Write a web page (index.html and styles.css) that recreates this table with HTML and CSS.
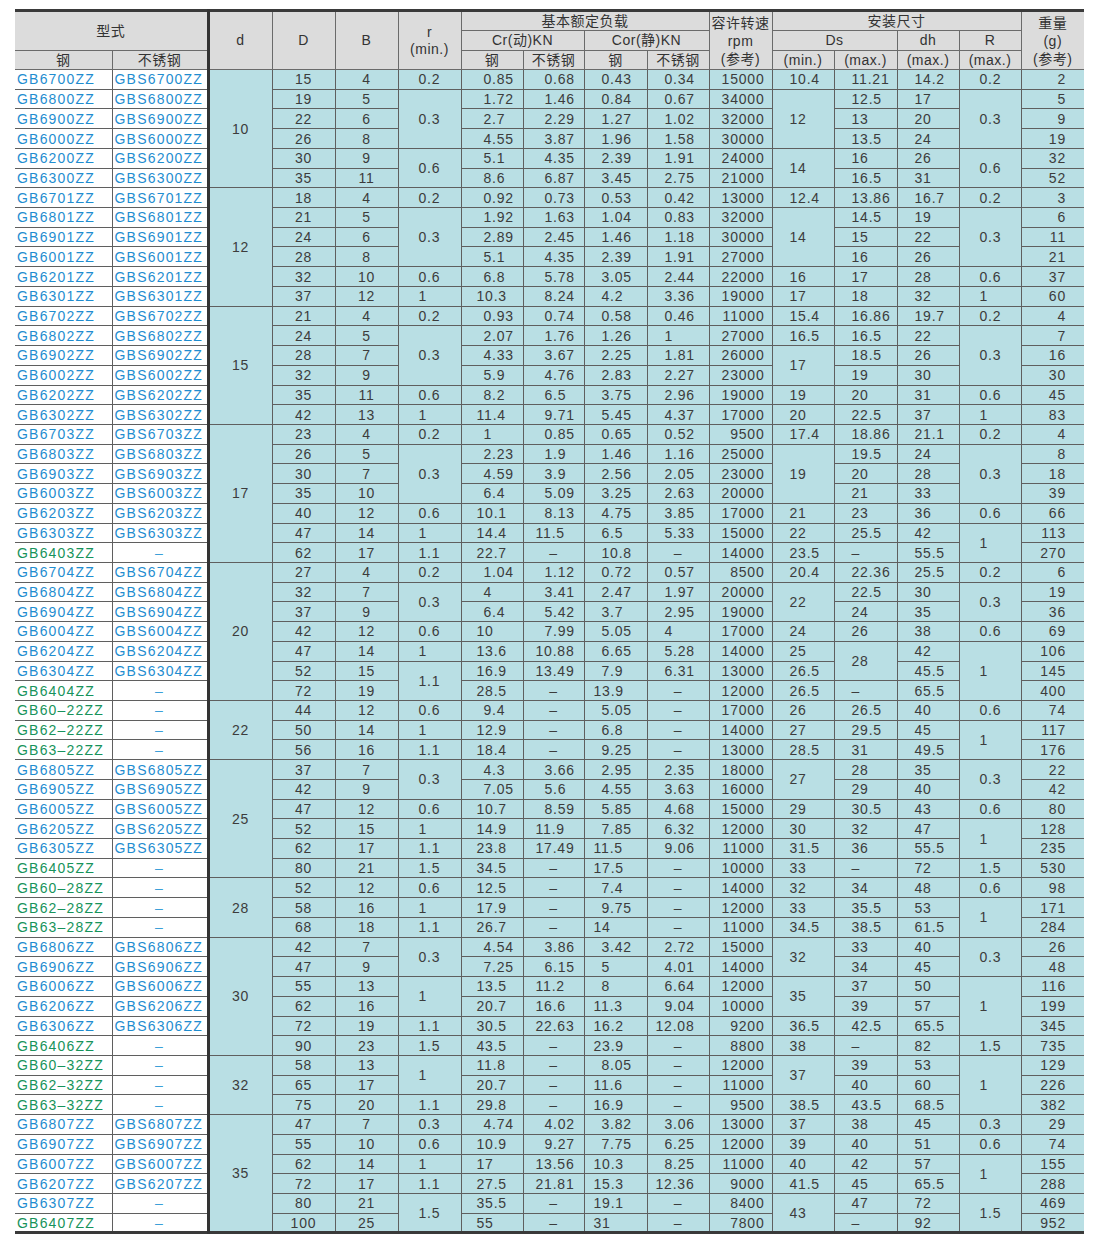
FILE: index.html
```html
<!DOCTYPE html>
<html lang="zh">
<head>
<meta charset="utf-8">
<title>深沟球轴承 ZZ 规格表</title>
<link rel="stylesheet" href="styles.css">
</head>
<body>
<table class="spec">
<colgroup>
<col class="w97"><col class="w96"><col class="w64"><col class="w63"><col class="w63"><col class="w63"><col class="w62"><col class="w61"><col class="w63"><col class="w62"><col class="w63"><col class="w62"><col class="w63"><col class="w62"><col class="w62"><col class="w63">
</colgroup>
<thead>
<tr class="h1">
<th colspan="2" rowspan="2" class="first thick">型式</th>
<th rowspan="3">d</th>
<th rowspan="3">D</th>
<th rowspan="3">B</th>
<th rowspan="3" class="two">r<br>(min.)</th>
<th colspan="4">基本额定负载</th>
<th rowspan="3" class="stack">容许转速<br>rpm<br>(参考)</th>
<th colspan="4">安装尺寸</th>
<th rowspan="3" class="stack last">重量<br>(g)<br>(参考)</th>
</tr>
<tr class="h2">
<th colspan="2">Cr(动)KN</th>
<th colspan="2">Cor(静)KN</th>
<th colspan="2">Ds</th>
<th>dh</th>
<th>R</th>
</tr>
<tr class="h3">
<th class="first">钢</th>
<th class="thick">不锈钢</th>
<th>钢</th>
<th>不锈钢</th>
<th>钢</th>
<th>不锈钢</th>
<th>(min.)</th>
<th>(max.)</th>
<th>(max.)</th>
<th>(max.)</th>
</tr>
</thead>
<tbody>
<tr><td class="mo">GB6700ZZ</td><td class="st">GBS6700ZZ</td><td rowspan="6">10</td><td>15</td><td>4</td><td class="rr">0.2</td><td class="cr">0.85</td><td class="cs">0.68</td><td class="co">0.43</td><td class="os">0.34</td><td class="rpm">15000</td><td class="ds">10.4</td><td class="ds">11.21</td><td class="ds">14.2</td><td class="rr">0.2</td><td class="wt">2</td></tr>
<tr><td class="mo">GB6800ZZ</td><td class="st">GBS6800ZZ</td><td>19</td><td>5</td><td class="rr" rowspan="3">0.3</td><td class="cr">1.72</td><td class="cs">1.46</td><td class="co">0.84</td><td class="os">0.67</td><td class="rpm">34000</td><td class="ds" rowspan="3">12</td><td class="ds">12.5</td><td class="ds">17</td><td class="rr" rowspan="3">0.3</td><td class="wt">5</td></tr>
<tr><td class="mo">GB6900ZZ</td><td class="st">GBS6900ZZ</td><td>22</td><td>6</td><td class="cr">2.7</td><td class="cs">2.29</td><td class="co">1.27</td><td class="os">1.02</td><td class="rpm">32000</td><td class="ds">13</td><td class="ds">20</td><td class="wt">9</td></tr>
<tr><td class="mo">GB6000ZZ</td><td class="st">GBS6000ZZ</td><td>26</td><td>8</td><td class="cr">4.55</td><td class="cs">3.87</td><td class="co">1.96</td><td class="os">1.58</td><td class="rpm">30000</td><td class="ds">13.5</td><td class="ds">24</td><td class="wt">19</td></tr>
<tr><td class="mo">GB6200ZZ</td><td class="st">GBS6200ZZ</td><td>30</td><td>9</td><td class="rr" rowspan="2">0.6</td><td class="cr">5.1</td><td class="cs">4.35</td><td class="co">2.39</td><td class="os">1.91</td><td class="rpm">24000</td><td class="ds" rowspan="2">14</td><td class="ds">16</td><td class="ds">26</td><td class="rr" rowspan="2">0.6</td><td class="wt">32</td></tr>
<tr><td class="mo">GB6300ZZ</td><td class="st">GBS6300ZZ</td><td>35</td><td>11</td><td class="cr">8.6</td><td class="cs">6.87</td><td class="co">3.45</td><td class="os">2.75</td><td class="rpm">21000</td><td class="ds">16.5</td><td class="ds">31</td><td class="wt">52</td></tr>

<tr><td class="mo">GB6701ZZ</td><td class="st">GBS6701ZZ</td><td rowspan="6">12</td><td>18</td><td>4</td><td class="rr">0.2</td><td class="cr">0.92</td><td class="cs">0.73</td><td class="co">0.53</td><td class="os">0.42</td><td class="rpm">13000</td><td class="ds">12.4</td><td class="ds">13.86</td><td class="ds">16.7</td><td class="rr">0.2</td><td class="wt">3</td></tr>
<tr><td class="mo">GB6801ZZ</td><td class="st">GBS6801ZZ</td><td>21</td><td>5</td><td class="rr" rowspan="3">0.3</td><td class="cr">1.92</td><td class="cs">1.63</td><td class="co">1.04</td><td class="os">0.83</td><td class="rpm">32000</td><td class="ds" rowspan="3">14</td><td class="ds">14.5</td><td class="ds">19</td><td class="rr" rowspan="3">0.3</td><td class="wt">6</td></tr>
<tr><td class="mo">GB6901ZZ</td><td class="st">GBS6901ZZ</td><td>24</td><td>6</td><td class="cr">2.89</td><td class="cs">2.45</td><td class="co">1.46</td><td class="os">1.18</td><td class="rpm">30000</td><td class="ds">15</td><td class="ds">22</td><td class="wt">11</td></tr>
<tr><td class="mo">GB6001ZZ</td><td class="st">GBS6001ZZ</td><td>28</td><td>8</td><td class="cr">5.1</td><td class="cs">4.35</td><td class="co">2.39</td><td class="os">1.91</td><td class="rpm">27000</td><td class="ds">16</td><td class="ds">26</td><td class="wt">21</td></tr>
<tr><td class="mo">GB6201ZZ</td><td class="st">GBS6201ZZ</td><td>32</td><td>10</td><td class="rr">0.6</td><td class="cr">6.8</td><td class="cs">5.78</td><td class="co">3.05</td><td class="os">2.44</td><td class="rpm">22000</td><td class="ds">16</td><td class="ds">17</td><td class="ds">28</td><td class="rr">0.6</td><td class="wt">37</td></tr>
<tr><td class="mo">GB6301ZZ</td><td class="st">GBS6301ZZ</td><td>37</td><td>12</td><td class="rr">1</td><td class="cr2">10.3</td><td class="cs">8.24</td><td class="co">4.2</td><td class="os">3.36</td><td class="rpm">19000</td><td class="ds">17</td><td class="ds">18</td><td class="ds">32</td><td class="rr">1</td><td class="wt">60</td></tr>

<tr><td class="mo">GB6702ZZ</td><td class="st">GBS6702ZZ</td><td rowspan="6">15</td><td>21</td><td>4</td><td class="rr">0.2</td><td class="cr">0.93</td><td class="cs">0.74</td><td class="co">0.58</td><td class="os">0.46</td><td class="rpm">11000</td><td class="ds">15.4</td><td class="ds">16.86</td><td class="ds">19.7</td><td class="rr">0.2</td><td class="wt">4</td></tr>
<tr><td class="mo">GB6802ZZ</td><td class="st">GBS6802ZZ</td><td>24</td><td>5</td><td class="rr" rowspan="3">0.3</td><td class="cr">2.07</td><td class="cs">1.76</td><td class="co">1.26</td><td class="os">1</td><td class="rpm">27000</td><td class="ds">16.5</td><td class="ds">16.5</td><td class="ds">22</td><td class="rr" rowspan="3">0.3</td><td class="wt">7</td></tr>
<tr><td class="mo">GB6902ZZ</td><td class="st">GBS6902ZZ</td><td>28</td><td>7</td><td class="cr">4.33</td><td class="cs">3.67</td><td class="co">2.25</td><td class="os">1.81</td><td class="rpm">26000</td><td class="ds" rowspan="2">17</td><td class="ds">18.5</td><td class="ds">26</td><td class="wt">16</td></tr>
<tr><td class="mo">GB6002ZZ</td><td class="st">GBS6002ZZ</td><td>32</td><td>9</td><td class="cr">5.9</td><td class="cs">4.76</td><td class="co">2.83</td><td class="os">2.27</td><td class="rpm">23000</td><td class="ds">19</td><td class="ds">30</td><td class="wt">30</td></tr>
<tr><td class="mo">GB6202ZZ</td><td class="st">GBS6202ZZ</td><td>35</td><td>11</td><td class="rr">0.6</td><td class="cr">8.2</td><td class="cs">6.5</td><td class="co">3.75</td><td class="os">2.96</td><td class="rpm">19000</td><td class="ds">19</td><td class="ds">20</td><td class="ds">31</td><td class="rr">0.6</td><td class="wt">45</td></tr>
<tr><td class="mo">GB6302ZZ</td><td class="st">GBS6302ZZ</td><td>42</td><td>13</td><td class="rr">1</td><td class="cr2">11.4</td><td class="cs">9.71</td><td class="co">5.45</td><td class="os">4.37</td><td class="rpm">17000</td><td class="ds">20</td><td class="ds">22.5</td><td class="ds">37</td><td class="rr">1</td><td class="wt">83</td></tr>

<tr><td class="mo">GB6703ZZ</td><td class="st">GBS6703ZZ</td><td rowspan="7">17</td><td>23</td><td>4</td><td class="rr">0.2</td><td class="cr">1</td><td class="cs">0.85</td><td class="co">0.65</td><td class="os">0.52</td><td class="rpm">9500</td><td class="ds">17.4</td><td class="ds">18.86</td><td class="ds">21.1</td><td class="rr">0.2</td><td class="wt">4</td></tr>
<tr><td class="mo">GB6803ZZ</td><td class="st">GBS6803ZZ</td><td>26</td><td>5</td><td class="rr" rowspan="3">0.3</td><td class="cr">2.23</td><td class="cs">1.9</td><td class="co">1.46</td><td class="os">1.16</td><td class="rpm">25000</td><td class="ds" rowspan="3">19</td><td class="ds">19.5</td><td class="ds">24</td><td class="rr" rowspan="3">0.3</td><td class="wt">8</td></tr>
<tr><td class="mo">GB6903ZZ</td><td class="st">GBS6903ZZ</td><td>30</td><td>7</td><td class="cr">4.59</td><td class="cs">3.9</td><td class="co">2.56</td><td class="os">2.05</td><td class="rpm">23000</td><td class="ds">20</td><td class="ds">28</td><td class="wt">18</td></tr>
<tr><td class="mo">GB6003ZZ</td><td class="st">GBS6003ZZ</td><td>35</td><td>10</td><td class="cr">6.4</td><td class="cs">5.09</td><td class="co">3.25</td><td class="os">2.63</td><td class="rpm">20000</td><td class="ds">21</td><td class="ds">33</td><td class="wt">39</td></tr>
<tr><td class="mo">GB6203ZZ</td><td class="st">GBS6203ZZ</td><td>40</td><td>12</td><td class="rr">0.6</td><td class="cr2">10.1</td><td class="cs">8.13</td><td class="co">4.75</td><td class="os">3.85</td><td class="rpm">17000</td><td class="ds">21</td><td class="ds">23</td><td class="ds">36</td><td class="rr">0.6</td><td class="wt">66</td></tr>
<tr><td class="mo">GB6303ZZ</td><td class="st">GBS6303ZZ</td><td>47</td><td>14</td><td class="rr">1</td><td class="cr2">14.4</td><td class="cs2">11.5</td><td class="co">6.5</td><td class="os">5.33</td><td class="rpm">15000</td><td class="ds">22</td><td class="ds">25.5</td><td class="ds">42</td><td class="rr" rowspan="2">1</td><td class="wt">113</td></tr>
<tr><td class="mo g">GB6403ZZ</td><td class="sd">–</td><td>62</td><td>17</td><td class="rr">1.1</td><td class="cr2">22.7</td><td>–</td><td class="co">10.8</td><td>–</td><td class="rpm">14000</td><td class="ds">23.5</td><td class="ds">–</td><td class="ds">55.5</td><td class="wt">270</td></tr>

<tr><td class="mo">GB6704ZZ</td><td class="st">GBS6704ZZ</td><td rowspan="7">20</td><td>27</td><td>4</td><td class="rr">0.2</td><td class="cr">1.04</td><td class="cs">1.12</td><td class="co">0.72</td><td class="os">0.57</td><td class="rpm">8500</td><td class="ds">20.4</td><td class="ds">22.36</td><td class="ds">25.5</td><td class="rr">0.2</td><td class="wt">6</td></tr>
<tr><td class="mo">GB6804ZZ</td><td class="st">GBS6804ZZ</td><td>32</td><td>7</td><td class="rr" rowspan="2">0.3</td><td class="cr">4</td><td class="cs">3.41</td><td class="co">2.47</td><td class="os">1.97</td><td class="rpm">20000</td><td class="ds" rowspan="2">22</td><td class="ds">22.5</td><td class="ds">30</td><td class="rr" rowspan="2">0.3</td><td class="wt">19</td></tr>
<tr><td class="mo">GB6904ZZ</td><td class="st">GBS6904ZZ</td><td>37</td><td>9</td><td class="cr">6.4</td><td class="cs">5.42</td><td class="co">3.7</td><td class="os">2.95</td><td class="rpm">19000</td><td class="ds">24</td><td class="ds">35</td><td class="wt">36</td></tr>
<tr><td class="mo">GB6004ZZ</td><td class="st">GBS6004ZZ</td><td>42</td><td>12</td><td class="rr">0.6</td><td class="cr2">10</td><td class="cs">7.99</td><td class="co">5.05</td><td class="os">4</td><td class="rpm">17000</td><td class="ds">24</td><td class="ds">26</td><td class="ds">38</td><td class="rr">0.6</td><td class="wt">69</td></tr>
<tr><td class="mo">GB6204ZZ</td><td class="st">GBS6204ZZ</td><td>47</td><td>14</td><td class="rr">1</td><td class="cr2">13.6</td><td class="cs2">10.88</td><td class="co">6.65</td><td class="os">5.28</td><td class="rpm">14000</td><td class="ds">25</td><td class="ds" rowspan="2">28</td><td class="ds">42</td><td class="rr" rowspan="3">1</td><td class="wt">106</td></tr>
<tr><td class="mo">GB6304ZZ</td><td class="st">GBS6304ZZ</td><td>52</td><td>15</td><td class="rr" rowspan="2">1.1</td><td class="cr2">16.9</td><td class="cs2">13.49</td><td class="co">7.9</td><td class="os">6.31</td><td class="rpm">13000</td><td class="ds">26.5</td><td class="ds">45.5</td><td class="wt">145</td></tr>
<tr><td class="mo g">GB6404ZZ</td><td class="sd">–</td><td>72</td><td>19</td><td class="cr2">28.5</td><td>–</td><td class="co2">13.9</td><td>–</td><td class="rpm">12000</td><td class="ds">26.5</td><td class="ds">–</td><td class="ds">65.5</td><td class="wt">400</td></tr>

<tr><td class="mo g">GB60–22ZZ</td><td class="sd">–</td><td rowspan="3">22</td><td>44</td><td>12</td><td class="rr">0.6</td><td class="cr">9.4</td><td>–</td><td class="co">5.05</td><td>–</td><td class="rpm">17000</td><td class="ds">26</td><td class="ds">26.5</td><td class="ds">40</td><td class="rr">0.6</td><td class="wt">74</td></tr>
<tr><td class="mo g">GB62–22ZZ</td><td class="sd">–</td><td>50</td><td>14</td><td class="rr">1</td><td class="cr2">12.9</td><td>–</td><td class="co">6.8</td><td>–</td><td class="rpm">14000</td><td class="ds">27</td><td class="ds">29.5</td><td class="ds">45</td><td class="rr" rowspan="2">1</td><td class="wt">117</td></tr>
<tr><td class="mo g">GB63–22ZZ</td><td class="sd">–</td><td>56</td><td>16</td><td class="rr">1.1</td><td class="cr2">18.4</td><td>–</td><td class="co">9.25</td><td>–</td><td class="rpm">13000</td><td class="ds">28.5</td><td class="ds">31</td><td class="ds">49.5</td><td class="wt">176</td></tr>

<tr><td class="mo">GB6805ZZ</td><td class="st">GBS6805ZZ</td><td rowspan="6">25</td><td>37</td><td>7</td><td class="rr" rowspan="2">0.3</td><td class="cr">4.3</td><td class="cs">3.66</td><td class="co">2.95</td><td class="os">2.35</td><td class="rpm">18000</td><td class="ds" rowspan="2">27</td><td class="ds">28</td><td class="ds">35</td><td class="rr" rowspan="2">0.3</td><td class="wt">22</td></tr>
<tr><td class="mo">GB6905ZZ</td><td class="st">GBS6905ZZ</td><td>42</td><td>9</td><td class="cr">7.05</td><td class="cs">5.6</td><td class="co">4.55</td><td class="os">3.63</td><td class="rpm">16000</td><td class="ds">29</td><td class="ds">40</td><td class="wt">42</td></tr>
<tr><td class="mo">GB6005ZZ</td><td class="st">GBS6005ZZ</td><td>47</td><td>12</td><td class="rr">0.6</td><td class="cr2">10.7</td><td class="cs">8.59</td><td class="co">5.85</td><td class="os">4.68</td><td class="rpm">15000</td><td class="ds">29</td><td class="ds">30.5</td><td class="ds">43</td><td class="rr">0.6</td><td class="wt">80</td></tr>
<tr><td class="mo">GB6205ZZ</td><td class="st">GBS6205ZZ</td><td>52</td><td>15</td><td class="rr">1</td><td class="cr2">14.9</td><td class="cs2">11.9</td><td class="co">7.85</td><td class="os">6.32</td><td class="rpm">12000</td><td class="ds">30</td><td class="ds">32</td><td class="ds">47</td><td class="rr" rowspan="2">1</td><td class="wt">128</td></tr>
<tr><td class="mo">GB6305ZZ</td><td class="st">GBS6305ZZ</td><td>62</td><td>17</td><td class="rr">1.1</td><td class="cr2">23.8</td><td class="cs2">17.49</td><td class="co2">11.5</td><td class="os">9.06</td><td class="rpm">11000</td><td class="ds">31.5</td><td class="ds">36</td><td class="ds">55.5</td><td class="wt">235</td></tr>
<tr><td class="mo g">GB6405ZZ</td><td class="sd">–</td><td>80</td><td>21</td><td class="rr">1.5</td><td class="cr2">34.5</td><td>–</td><td class="co2">17.5</td><td>–</td><td class="rpm">10000</td><td class="ds">33</td><td class="ds">–</td><td class="ds">72</td><td class="rr">1.5</td><td class="wt">530</td></tr>

<tr><td class="mo g">GB60–28ZZ</td><td class="sd">–</td><td rowspan="3">28</td><td>52</td><td>12</td><td class="rr">0.6</td><td class="cr2">12.5</td><td>–</td><td class="co">7.4</td><td>–</td><td class="rpm">14000</td><td class="ds">32</td><td class="ds">34</td><td class="ds">48</td><td class="rr">0.6</td><td class="wt">98</td></tr>
<tr><td class="mo g">GB62–28ZZ</td><td class="sd">–</td><td>58</td><td>16</td><td class="rr">1</td><td class="cr2">17.9</td><td>–</td><td class="co">9.75</td><td>–</td><td class="rpm">12000</td><td class="ds">33</td><td class="ds">35.5</td><td class="ds">53</td><td class="rr" rowspan="2">1</td><td class="wt">171</td></tr>
<tr><td class="mo g">GB63–28ZZ</td><td class="sd">–</td><td>68</td><td>18</td><td class="rr">1.1</td><td class="cr2">26.7</td><td>–</td><td class="co2">14</td><td>–</td><td class="rpm">11000</td><td class="ds">34.5</td><td class="ds">38.5</td><td class="ds">61.5</td><td class="wt">284</td></tr>

<tr><td class="mo">GB6806ZZ</td><td class="st">GBS6806ZZ</td><td rowspan="6">30</td><td>42</td><td>7</td><td class="rr" rowspan="2">0.3</td><td class="cr">4.54</td><td class="cs">3.86</td><td class="co">3.42</td><td class="os">2.72</td><td class="rpm">15000</td><td class="ds" rowspan="2">32</td><td class="ds">33</td><td class="ds">40</td><td class="rr" rowspan="2">0.3</td><td class="wt">26</td></tr>
<tr><td class="mo">GB6906ZZ</td><td class="st">GBS6906ZZ</td><td>47</td><td>9</td><td class="cr">7.25</td><td class="cs">6.15</td><td class="co">5</td><td class="os">4.01</td><td class="rpm">14000</td><td class="ds">34</td><td class="ds">45</td><td class="wt">48</td></tr>
<tr><td class="mo">GB6006ZZ</td><td class="st">GBS6006ZZ</td><td>55</td><td>13</td><td class="rr" rowspan="2">1</td><td class="cr2">13.5</td><td class="cs2">11.2</td><td class="co">8</td><td class="os">6.64</td><td class="rpm">12000</td><td class="ds" rowspan="2">35</td><td class="ds">37</td><td class="ds">50</td><td class="rr" rowspan="3">1</td><td class="wt">116</td></tr>
<tr><td class="mo">GB6206ZZ</td><td class="st">GBS6206ZZ</td><td>62</td><td>16</td><td class="cr2">20.7</td><td class="cs2">16.6</td><td class="co2">11.3</td><td class="os">9.04</td><td class="rpm">10000</td><td class="ds">39</td><td class="ds">57</td><td class="wt">199</td></tr>
<tr><td class="mo">GB6306ZZ</td><td class="st">GBS6306ZZ</td><td>72</td><td>19</td><td class="rr">1.1</td><td class="cr2">30.5</td><td class="cs2">22.63</td><td class="co2">16.2</td><td class="os2">12.08</td><td class="rpm">9200</td><td class="ds">36.5</td><td class="ds">42.5</td><td class="ds">65.5</td><td class="wt">345</td></tr>
<tr><td class="mo g">GB6406ZZ</td><td class="sd">–</td><td>90</td><td>23</td><td class="rr">1.5</td><td class="cr2">43.5</td><td>–</td><td class="co2">23.9</td><td>–</td><td class="rpm">8800</td><td class="ds">38</td><td class="ds">–</td><td class="ds">82</td><td class="rr">1.5</td><td class="wt">735</td></tr>

<tr><td class="mo g">GB60–32ZZ</td><td class="sd">–</td><td rowspan="3">32</td><td>58</td><td>13</td><td class="rr" rowspan="2">1</td><td class="cr2">11.8</td><td>–</td><td class="co">8.05</td><td>–</td><td class="rpm">12000</td><td class="ds" rowspan="2">37</td><td class="ds">39</td><td class="ds">53</td><td class="rr" rowspan="3">1</td><td class="wt">129</td></tr>
<tr><td class="mo g">GB62–32ZZ</td><td class="sd">–</td><td>65</td><td>17</td><td class="cr2">20.7</td><td>–</td><td class="co2">11.6</td><td>–</td><td class="rpm">11000</td><td class="ds">40</td><td class="ds">60</td><td class="wt">226</td></tr>
<tr><td class="mo g">GB63–32ZZ</td><td class="sd">–</td><td>75</td><td>20</td><td class="rr">1.1</td><td class="cr2">29.8</td><td>–</td><td class="co2">16.9</td><td>–</td><td class="rpm">9500</td><td class="ds">38.5</td><td class="ds">43.5</td><td class="ds">68.5</td><td class="wt">382</td></tr>

<tr><td class="mo">GB6807ZZ</td><td class="st">GBS6807ZZ</td><td rowspan="6">35</td><td>47</td><td>7</td><td class="rr">0.3</td><td class="cr">4.74</td><td class="cs">4.02</td><td class="co">3.82</td><td class="os">3.06</td><td class="rpm">13000</td><td class="ds">37</td><td class="ds">38</td><td class="ds">45</td><td class="rr">0.3</td><td class="wt">29</td></tr>
<tr><td class="mo">GB6907ZZ</td><td class="st">GBS6907ZZ</td><td>55</td><td>10</td><td class="rr">0.6</td><td class="cr2">10.9</td><td class="cs">9.27</td><td class="co">7.75</td><td class="os">6.25</td><td class="rpm">12000</td><td class="ds">39</td><td class="ds">40</td><td class="ds">51</td><td class="rr">0.6</td><td class="wt">74</td></tr>
<tr><td class="mo">GB6007ZZ</td><td class="st">GBS6007ZZ</td><td>62</td><td>14</td><td class="rr">1</td><td class="cr2">17</td><td class="cs2">13.56</td><td class="co2">10.3</td><td class="os">8.25</td><td class="rpm">11000</td><td class="ds">40</td><td class="ds">42</td><td class="ds">57</td><td class="rr" rowspan="2">1</td><td class="wt">155</td></tr>
<tr><td class="mo">GB6207ZZ</td><td class="st">GBS6207ZZ</td><td>72</td><td>17</td><td class="rr">1.1</td><td class="cr2">27.5</td><td class="cs2">21.81</td><td class="co2">15.3</td><td class="os2">12.36</td><td class="rpm">9000</td><td class="ds">41.5</td><td class="ds">45</td><td class="ds">65.5</td><td class="wt">288</td></tr>
<tr><td class="mo">GB6307ZZ</td><td class="sd">–</td><td>80</td><td>21</td><td class="rr" rowspan="2">1.5</td><td class="cr2">35.5</td><td>–</td><td class="co2">19.1</td><td>–</td><td class="rpm">8400</td><td class="ds" rowspan="2">43</td><td class="ds">47</td><td class="ds">72</td><td class="rr" rowspan="2">1.5</td><td class="wt">469</td></tr>
<tr><td class="mo g">GB6407ZZ</td><td class="sd">–</td><td>100</td><td>25</td><td class="cr2">55</td><td>–</td><td class="co2">31</td><td>–</td><td class="rpm">7800</td><td class="ds">–</td><td class="ds">92</td><td class="wt">952</td></tr>
</tbody>
</table>
</body>
</html>
```

FILE: styles.css
```css
html, body {
  margin: 0;
  padding: 0;
  background: #ffffff;
}

.spec {
  border-collapse: collapse;
  table-layout: fixed;
  width: 1069px;
  margin: 9px 0 0 15px;
  font-family: "Liberation Sans", "Noto Sans CJK SC", sans-serif;
  color: #3c3c3c;
  border-top: 3px solid #3a3a3a;
  border-bottom: 3px solid #3a3a3a;
}

.w97 { width: 97px; }
.w96 { width: 96px; }
.w64 { width: 64px; }
.w63 { width: 63px; }
.w62 { width: 62px; }
.w61 { width: 61px; }

/* header */
.spec th {
  background: #dcdcdc;
  color: #333333;
  font-weight: normal;
  font-size: 14px;
  letter-spacing: 0.5px;
  line-height: 17px;
  padding: 0;
  border: 1px solid #6b6b6b;
  text-align: center;
  vertical-align: middle;
  white-space: nowrap;
}
.spec .h1 { height: 20px; }
.spec .h2 { height: 20px; }
.spec .h3 { height: 19px; }
.spec th.stack { line-height: 18px; }
.spec th.first { border-left: 0; }
.spec th.last { border-right: 0; }
.spec .thick { border-right: 3px solid #333333; }

/* body */
.spec tbody tr { height: 19.73px; }
.spec td {
  background: #b9dfe4;
  border: 1px solid #5f5f5f;
  padding: 0;
  font-size: 14px;
  letter-spacing: 0.8px;
  line-height: 16px;
  text-align: center;
  vertical-align: middle;
  white-space: nowrap;
  overflow: hidden;
}

.spec td.mo,
.spec td.st,
.spec td.sd {
  background: #ffffff;
  color: #1f8dd0;
  letter-spacing: 1.2px;
}
.spec td.mo { text-align: left; padding-left: 2px; border-left: 0; }
.spec td.st { text-align: left; padding-left: 2px; border-right: 3px solid #333333; }
.spec td.sd { text-align: center; color: #3c9fd8; border-right: 3px solid #333333; }
.spec td.g { color: #17935b; }

.spec td.rr { text-align: left; padding-left: 20px; }
.spec td.cr { text-align: left; padding-left: 22px; }
.spec td.cr2 { text-align: left; padding-left: 15px; }
.spec td.cs { text-align: left; padding-left: 21px; }
.spec td.cs2 { text-align: left; padding-left: 12px; }
.spec td.co { text-align: left; padding-left: 17px; }
.spec td.co2 { text-align: left; padding-left: 9px; }
.spec td.os { text-align: left; padding-left: 17px; }
.spec td.os2 { text-align: left; padding-left: 8px; }
.spec td.rpm { text-align: right; padding-right: 7px; }
.spec td.ds { text-align: left; padding-left: 17px; }
.spec td.wt { text-align: right; padding-right: 18px; border-right: 0; }
```
